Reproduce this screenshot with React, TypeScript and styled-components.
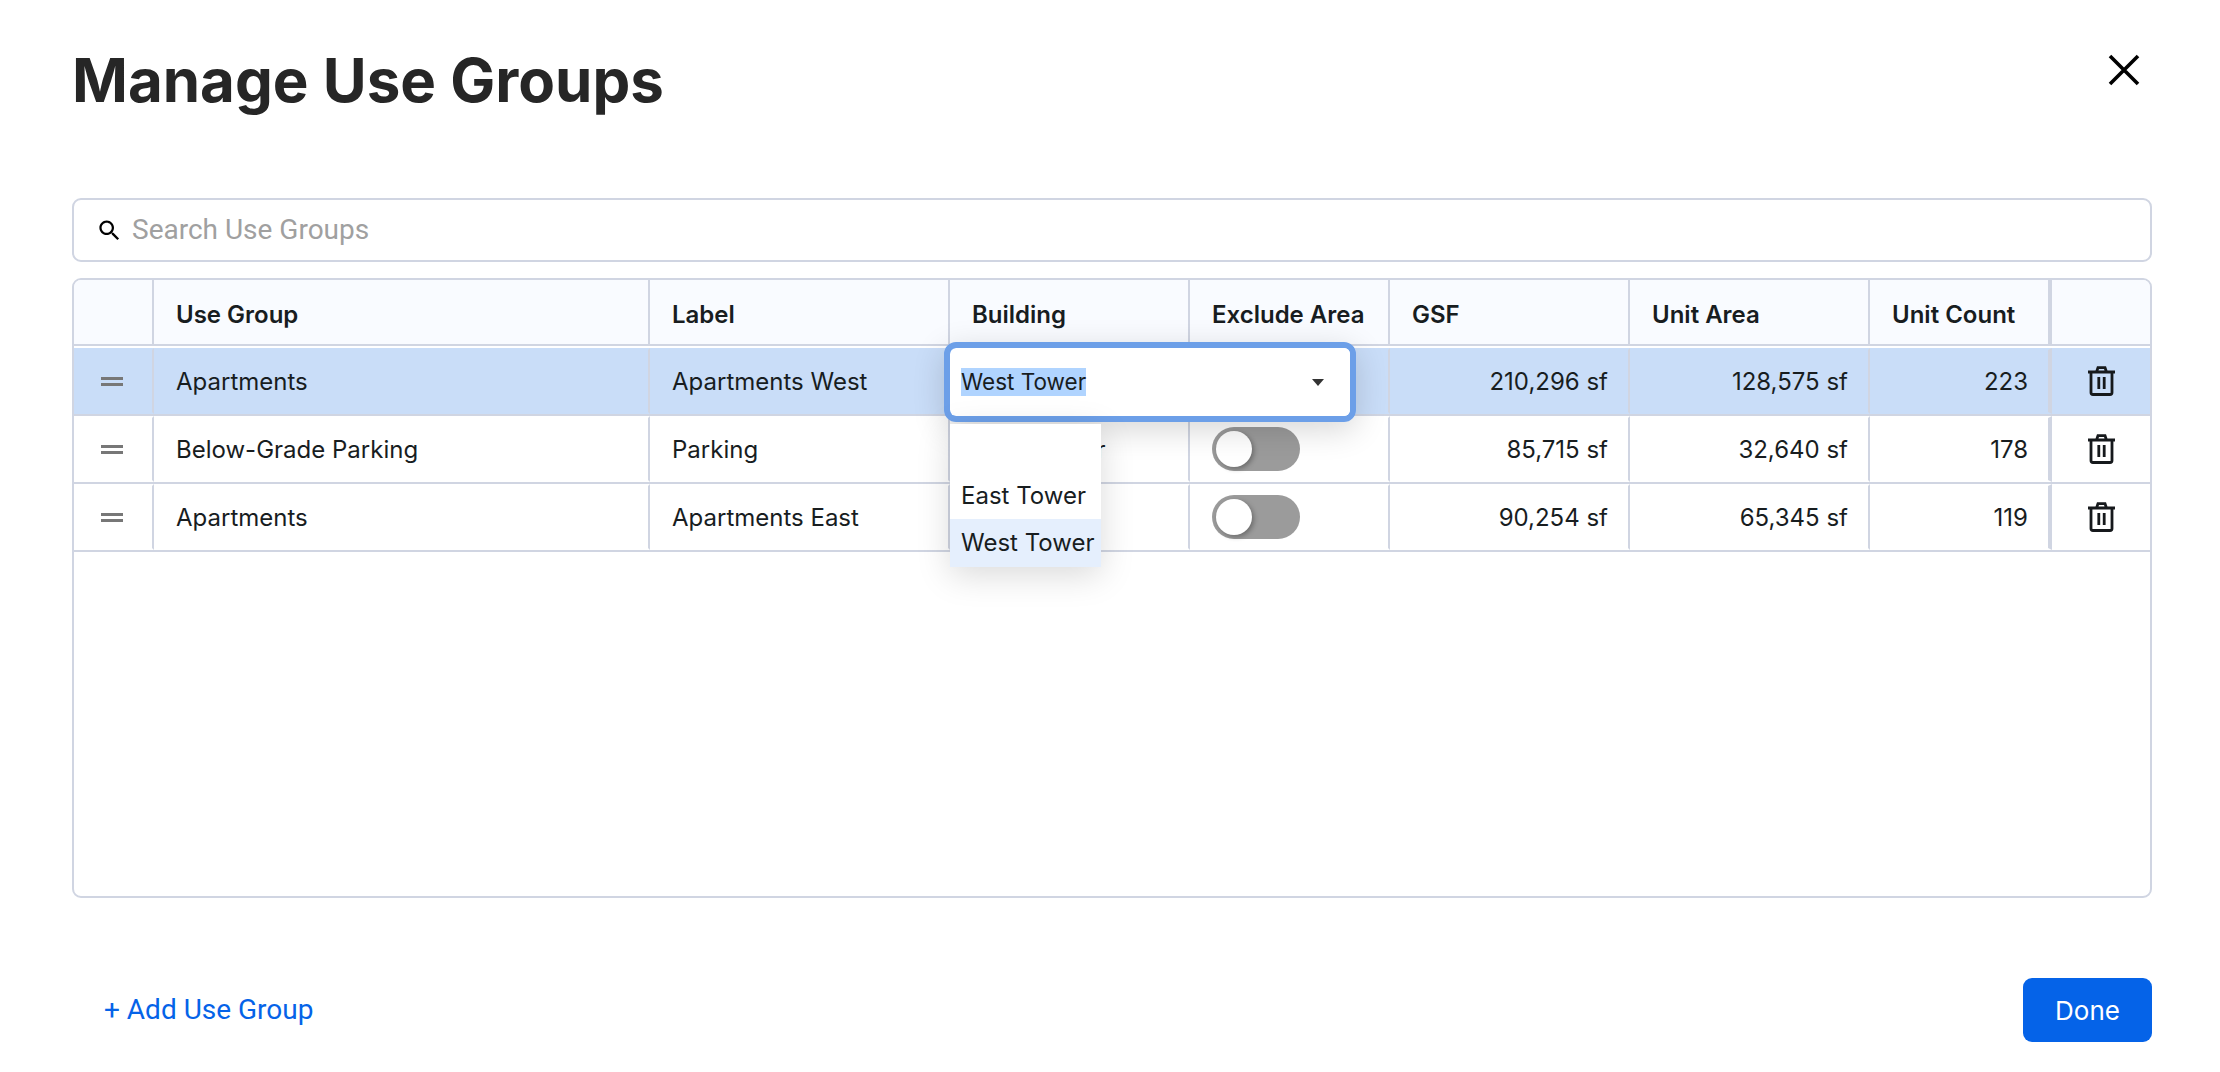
import React from 'react';
import styled, { createGlobalStyle } from 'styled-components';

const COLUMNS = '80px 496px 300px 240px 200px 240px 240px 182px 98px';

const rows = [
  { group: 'Apartments', label: 'Apartments West', building: 'West Tower', gsf: '210,296 sf', area: '128,575 sf', count: '223', selected: true },
  { group: 'Below-Grade Parking', label: 'Parking', building: 'West Tower', gsf: '85,715 sf', area: '32,640 sf', count: '178', selected: false },
  { group: 'Apartments', label: 'Apartments East', building: 'East Tower', gsf: '90,254 sf', area: '65,345 sf', count: '119', selected: false },
];

const App = () => {
  return (
    <Page>
      <GlobalStyle />
      <Header>
        <Title>Manage Use Groups</Title>
        <CloseButton aria-label='Close'>
          <svg width='32' height='32' viewBox='0 0 32 32' fill='none' stroke='#000' strokeWidth='3.6'>
            <path d='M2 2l28 28M30 2L2 30' />
          </svg>
        </CloseButton>
      </Header>

      <Search>
        <svg width='27' height='27' viewBox='0 0 24 24' fill='#000'>
          <path d='M15.5 14h-.79l-.28-.27C15.41 12.59 16 11.11 16 9.5 16 5.91 13.09 3 9.5 3S3 5.91 3 9.5 5.91 16 9.5 16c1.61 0 3.09-.59 4.23-1.57l.27.28v.79l5 4.99L20.49 19l-4.99-5zm-6 0C7.01 14 5 11.99 5 9.5S7.01 5 9.5 5 14 7.01 14 9.5 11.99 14 9.5 14z' />
        </svg>
        <SearchInput placeholder='Search Use Groups' />
      </Search>

      <Table>
        <HeaderRow>
          <HeaderCell />
          <HeaderCell>Use Group</HeaderCell>
          <HeaderCell>Label</HeaderCell>
          <HeaderCell>Building</HeaderCell>
          <HeaderCell>Exclude Area</HeaderCell>
          <HeaderCell>GSF</HeaderCell>
          <HeaderCell>Unit Area</HeaderCell>
          <HeaderCell $pinned>Unit Count</HeaderCell>
          <HeaderCell $last />
        </HeaderRow>

        {rows.map((row, index) => (
          <Row key={index} $selected={row.selected}>
            <Cell $center>
              <DragHandle />
            </Cell>
            <Cell>{row.group}</Cell>
            <Cell>{row.label}</Cell>
            <Cell $overlay={row.selected}>
              {!row.selected && row.building}
              {row.selected && (
                <Editor>
                  <EditorField>
                    <SelectedText>West Tower</SelectedText>
                    <svg width='12' height='7' viewBox='0 0 12 7' fill='#333'>
                      <path d='M0 0h12L6 7z' />
                    </svg>
                  </EditorField>
                  <Menu>
                    <MenuItem />
                    <MenuItem>East Tower</MenuItem>
                    <MenuItem $active>West Tower</MenuItem>
                  </Menu>
                </Editor>
              )}
            </Cell>
            <Cell>
              <Toggle>
                <Knob />
              </Toggle>
            </Cell>
            <Cell $right>{row.gsf}</Cell>
            <Cell $right>{row.area}</Cell>
            <Cell $right $pinned>{row.count}</Cell>
            <Cell $center $last>
              <svg width='27' height='30' viewBox='0 0 27 30' fill='none' stroke='#16191c' strokeWidth='2.8'>
                <path d='M0 6h27M8.5 6l1.5-4.4h7L18.5 6M3 6v20.5q0 2 2 2h17q2 0 2-2V6M10.8 11v12M16.2 11v12' />
              </svg>
            </Cell>
          </Row>
        ))}
      </Table>

      <Footer>
        <AddLink>+ Add Use Group</AddLink>
        <DoneButton>Done</DoneButton>
      </Footer>
    </Page>
  );
};

const GlobalStyle = createGlobalStyle`
  body {
    margin: 0;
    background: #fff;
    font-family: Inter, 'Liberation Sans', sans-serif;
    color: #181d1f;
  }

  * {
    box-sizing: border-box;
  }
`;

const Page = styled.main`
  width: 2220px;
  height: 1072px;
  padding: 44px 68px 0 72px;
  overflow: hidden;
`;

const Header = styled.header`
  display: flex;
  justify-content: space-between;
  align-items: flex-start;
  height: 72px;
`;

const Title = styled.h1`
  margin: 0;
  font-size: 60px;
  line-height: 72px;
  font-weight: 700;
  color: #262626;
`;

const CloseButton = styled.button`
  display: flex;
  padding: 0;
  margin: 10px 12px 0 0;
  border: 0;
  background: none;
`;

const Search = styled.div`
  display: flex;
  align-items: center;
  gap: 9px;
  height: 64px;
  margin-top: 82px;
  padding: 0 22px;
  border: 2px solid #d0d5e2;
  border-radius: 9px;
`;

const SearchInput = styled.input`
  flex: 1;
  margin-bottom: 2px;
  border: 0;
  outline: 0;
  padding: 0;
  font-family: Roboto, sans-serif;
  font-size: 28px;

  &::placeholder {
    color: #a0a0a0;
    opacity: 1;
  }
`;

const Table = styled.section`
  height: 620px;
  margin-top: 16px;
  border: 2px solid #d0d5e2;
  border-radius: 9px;
  font-size: 24px;
`;

const HeaderRow = styled.div`
  display: grid;
  grid-template-columns: ${COLUMNS};
  height: 66px;
  margin-bottom: 2px;
  background: #f9fbff;
  border-bottom: 2px solid #d0d5e2;
  border-radius: 7px 7px 0 0;
`;

const HeaderCell = styled.div<{ $pinned?: boolean; $last?: boolean }>`
  display: flex;
  align-items: center;
  padding: 4px 22px 0;
  font-weight: 600;
  white-space: nowrap;
  border-right: ${({ $pinned, $last }) => ($last ? '0' : $pinned ? '4px' : '2px')} solid #d0d5e2;
`;

const Row = styled.div<{ $selected?: boolean }>`
  display: grid;
  grid-template-columns: ${COLUMNS};
  height: 68px;
  background: ${({ $selected }) => ($selected ? '#c9ddf8' : '#fff')};
  border-bottom: 2px solid #d0d5e2;
`;

const Cell = styled.div<{ $center?: boolean; $right?: boolean; $pinned?: boolean; $last?: boolean; $overlay?: boolean }>`
  position: ${({ $overlay }) => ($overlay ? 'relative' : 'static')};
  display: flex;
  align-items: center;
  justify-content: ${({ $center, $right }) => ($center ? 'center' : $right ? 'flex-end' : 'flex-start')};
  padding: 0 ${({ $center }) => ($center ? '0' : '20px')};
  border: 2px solid transparent;
  border-left-width: ${({ $center }) => ($center ? '0' : '2px')};
  border-right: ${({ $pinned, $last }) => ($last ? '0' : $pinned ? '4px' : '2px')} solid #d0d5e2;
  white-space: nowrap;
`;

const DragHandle = styled.span`
  width: 22px;
  height: 9px;
  margin-right: 2px;
  border-top: 3px solid #777;
  border-bottom: 3px solid #777;
`;

const Editor = styled.div`
  position: absolute;
  left: -8px;
  top: -8px;
  z-index: 2;
  width: 412px;
  height: 80px;
  border: 6px solid #6c9fe8;
  border-radius: 12px;
  background: linear-gradient(to right, #0563e8 50%, #fff 50%);
  box-shadow: 0 8px 32px rgba(0, 0, 0, 0.16);
`;

const EditorField = styled.div`
  display: flex;
  align-items: center;
  justify-content: space-between;
  height: 100%;
  padding: 0 26px 0 11px;
  border-radius: 6px;
  background: #fff;
  font-size: 22.5px;
`;

const SelectedText = styled.span`
  line-height: 28px;
  background: #b0d4ff;
`;

const Menu = styled.div`
  position: absolute;
  left: 0;
  top: 76px;
  width: 151px;
  background: #fff;
  box-shadow: 0 8px 32px rgba(0, 0, 0, 0.15);
`;

const MenuItem = styled.div<{ $active?: boolean }>`
  height: 47.67px;
  padding: 0 0 0 11px;
  line-height: 47.67px;
  background: ${({ $active }) => ($active ? '#e5effd' : '#fff')};
`;

const Toggle = styled.span`
  display: flex;
  align-items: center;
  width: 88px;
  height: 44px;
  padding: 0 4px;
  border-radius: 22px;
  background: #9b9b9b;
`;

const Knob = styled.span`
  width: 36px;
  height: 36px;
  border-radius: 50%;
  background: #fff;
  box-shadow: 2px 2px 5px rgba(0, 0, 0, 0.3);
`;

const Footer = styled.footer`
  display: flex;
  align-items: center;
  justify-content: space-between;
  margin-top: 80px;
  padding-left: 32px;
`;

const AddLink = styled.a`
  margin-bottom: 2px;
  font-family: Roboto, sans-serif;
  font-size: 28px;
  color: #0563e8;
`;

const DoneButton = styled.button`
  width: 129px;
  height: 64px;
  border: 0;
  border-radius: 9px;
  background: #0563e8;
  color: #fff;
  font-family: Inter, sans-serif;
  font-size: 26px;
`;

export default App;
